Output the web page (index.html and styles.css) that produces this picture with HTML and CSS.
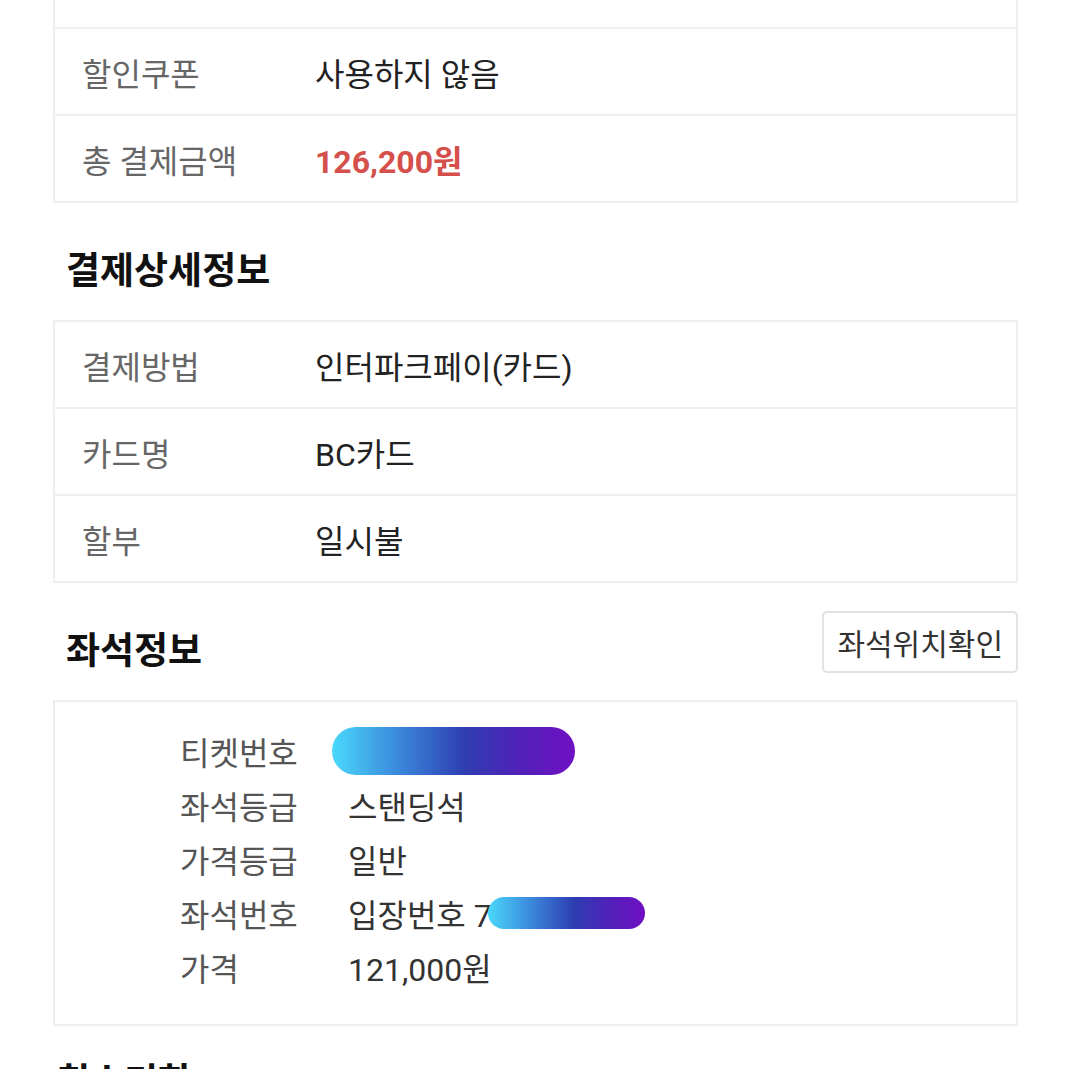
FILE: index.html
```html
<!DOCTYPE html>
<html lang="ko">
<head>
    <meta charset="UTF-8">
    <meta name="viewport" content="width=device-width, initial-scale=1.0">
    <title>예매 상세</title>
    <link rel="stylesheet" href="styles.css">
</head>
<body>

    <div class="container">

        <div class="info-card">
            <div class="info-row">
                <!-- row above the fold, scrolled out of view -->
            </div>
            <div class="info-row">
                <span class="info-label">할인쿠폰</span>
                <span class="info-value">사용하지 않음</span>
            </div>
            <div class="info-row">
                <span class="info-label">총 결제금액</span>
                <span class="info-value total">126,200원</span>
            </div>
        </div>

        <div class="section-header">
            <h2>결제상세정보</h2>
        </div>

        <div class="info-card">
            <div class="info-row">
                <span class="info-label">결제방법</span>
                <span class="info-value">인터파크페이(카드)</span>
            </div>
            <div class="info-row">
                <span class="info-label">카드명</span>
                <span class="info-value">BC카드</span>
            </div>
            <div class="info-row">
                <span class="info-label">할부</span>
                <span class="info-value">일시불</span>
            </div>
        </div>

        <div class="section-header">
            <h2>좌석정보</h2>
            <button class="seat-btn">좌석위치확인</button>
        </div>

        <div class="info-card seat-card">
            <div class="seat-row">
                <span class="seat-label">티켓번호</span>
                <span class="seat-value"><span class="mask mask-ticket"></span></span>
            </div>
            <div class="seat-row">
                <span class="seat-label">좌석등급</span>
                <span class="seat-value">스탠딩석</span>
            </div>
            <div class="seat-row">
                <span class="seat-label">가격등급</span>
                <span class="seat-value">일반</span>
            </div>
            <div class="seat-row">
                <span class="seat-label">좌석번호</span>
                <span class="seat-value">입장번호 7<span class="mask mask-entry"></span></span>
            </div>
            <div class="seat-row">
                <span class="seat-label">가격</span>
                <span class="seat-value">121,000원</span>
            </div>
        </div>

        <div class="cancel-header">
            <h2>취소기한</h2>
            <span class="cancel-date">2025.01.01(일) 17:00 까지</span>
        </div>

    </div>

</body>
</html>
```

FILE: styles.css
```css
body {
    font-family: Roboto, "Noto Sans CJK KR", sans-serif;
    background-color: #fff;
    color: #222;
    margin: 0;
    padding: 0;
}

.container {
    width: 965px;
    margin: -60px 0 0 53px;
}

.info-card {
    border: 2px solid #efefef;
    background: white;
}

.info-row {
    display: flex;
    align-items: center;
    height: 85px;
    padding-left: 27px;
    font-size: 32px;
}

.info-row + .info-row {
    border-top: 2px solid #efefef;
}

.info-label {
    width: 233px;
    color: #666;
}

.info-value {
    color: #222;
}

.info-value.total {
    color: #d5504b;
    font-weight: bold;
}

.section-header {
    display: flex;
    justify-content: space-between;
    align-items: center;
    height: 62px;
    margin: 28px 0 27px;
}

.section-header h2 {
    margin: 0;
    padding: 20px 0 0 13px;
    font-size: 37px;
    line-height: 42px;
    color: #111;
}

.seat-btn {
    height: 62px;
    padding: 0 13px;
    background: white;
    border: 2px solid #e2e2e2;
    border-radius: 5px;
    font-family: Roboto, "Noto Sans CJK KR", sans-serif;
    font-size: 30px;
    color: #333;
}

.seat-card {
    padding: 22px 0 30px 125px;
}

.seat-row {
    display: flex;
    align-items: center;
    height: 54px;
    font-size: 32px;
}

.seat-label {
    width: 168px;
    color: #555;
}

.seat-value {
    display: flex;
    align-items: center;
    color: #333;
}

.mask {
    display: inline-block;
    border-radius: 30px;
    background: linear-gradient(90deg, #4ad8fb 0%, #3a86da 28%, #2e3db1 55%, #5220b9 78%, #7010c4 100%);
}

.mask-ticket {
    width: 243px;
    height: 48px;
    margin-left: -16px;
}

.mask-entry {
    width: 157px;
    height: 32px;
    margin-left: -4px;
}

.cancel-header {
    display: flex;
    align-items: baseline;
    margin-top: 26px;
    padding-left: 3px;
}

.cancel-header h2 {
    margin: 0;
    font-size: 37px;
    color: #111;
}

.cancel-date {
    margin-left: 12px;
    font-size: 28px;
    color: #555;
}
```
